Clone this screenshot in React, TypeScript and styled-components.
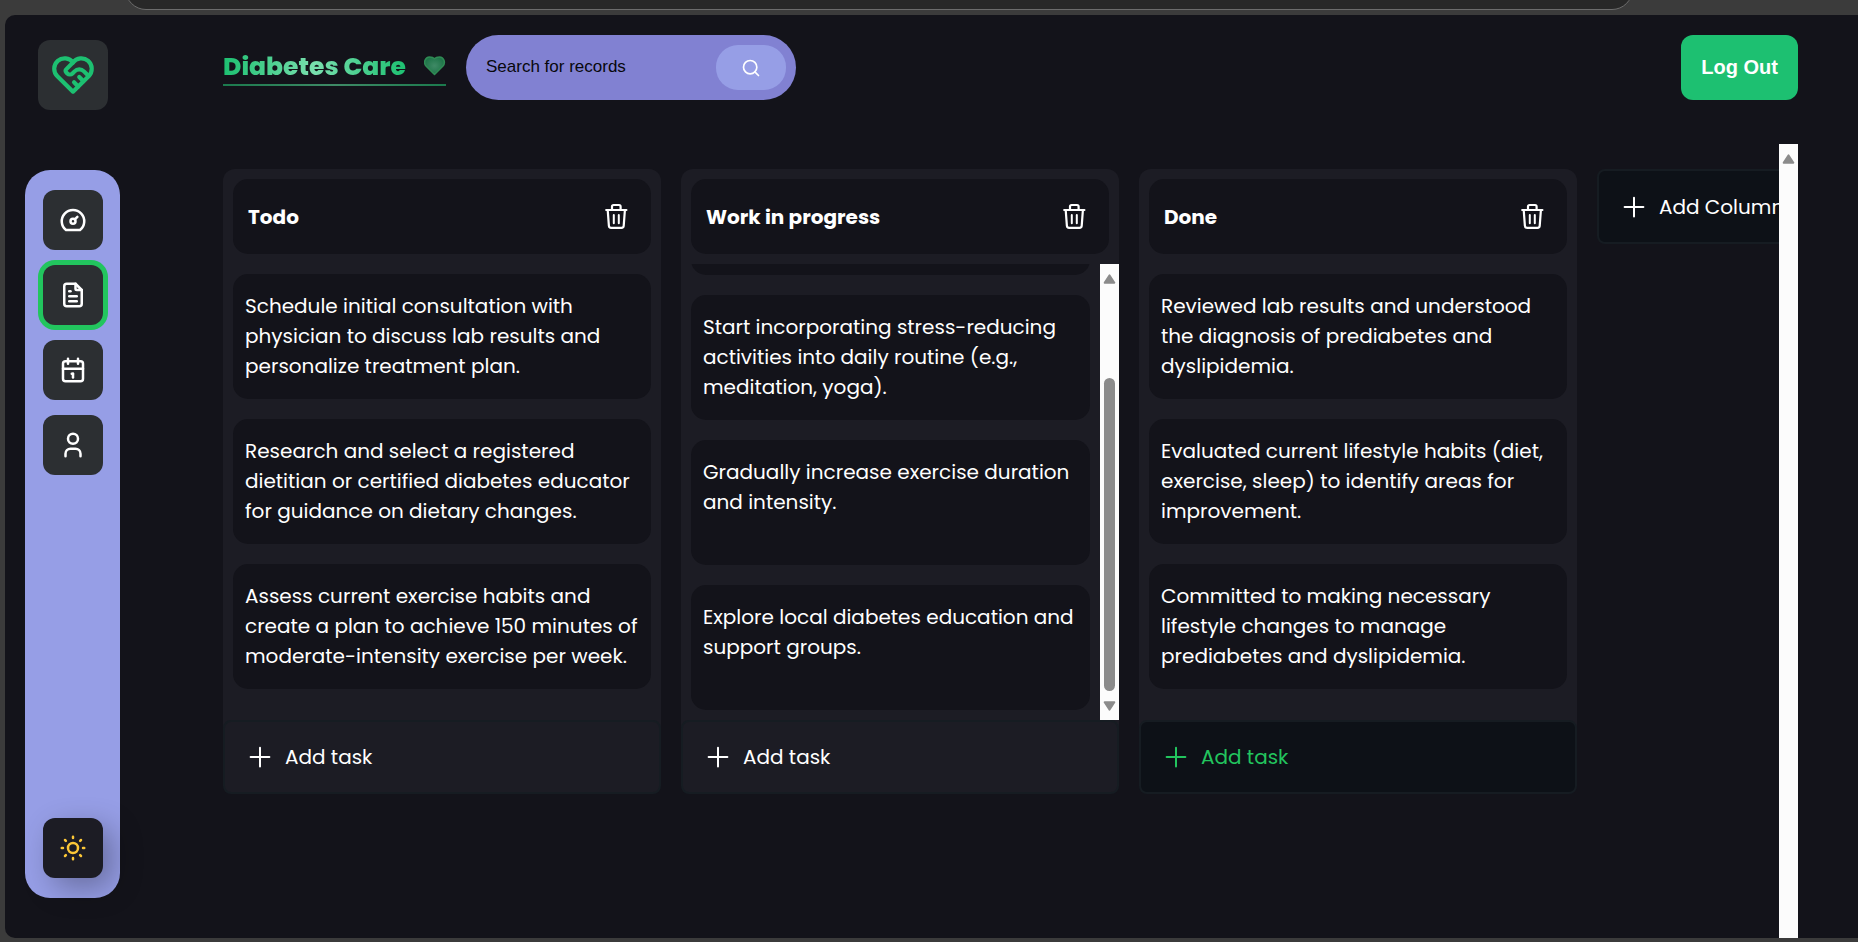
import React, { useLayoutEffect, useRef } from "react";
import styled, { createGlobalStyle, css } from "styled-components";
import { TbHeartHandshake, TbDashboard, TbFileText, TbCalendar, TbUser, TbSun } from "react-icons/tb";
import { FiSearch } from "react-icons/fi";

const GlobalStyle = createGlobalStyle`
  *, *::before, *::after { box-sizing: border-box; }
  body { margin: 0; background: #3b3b3b; }
  button, input { font: inherit; border: 0; margin: 0; }
  h1, h2, p, ul { margin: 0; padding: 0; }
`;

const Shell = styled.div`
  display: flex;
  flex-direction: column;
  height: 100vh;
  overflow: hidden;
  padding: 0 0 4px 5px;
  font-family: Poppins, Inter, sans-serif;
  font-size: 20px;
  line-height: 30px;
  color: #fff;
`;

const BrowserBar = styled.div`
  flex: none;
  display: flex;
  align-items: flex-end;
  height: 15px;
  padding: 0 225px 5px 120px;
  overflow: hidden;
`;

const AddressPill = styled.div`
  flex: 1;
  height: 42px;
  border: 1px solid #6c6c6c;
  border-radius: 21px;
  background: #282828;
`;

const Page = styled.div`
  flex: 1;
  min-height: 0;
  display: flex;
  gap: 103px;
  padding: 20px 60px 0 20px;
  border-radius: 10px 0 0 10px;
  background: #13131a;
`;

const Side = styled.aside`
  flex: none;
  display: flex;
  flex-direction: column;
  align-items: center;
  width: 95px;
  padding: 5px 0 40px;
`;

const LogoTile = styled.div`
  display: grid;
  place-items: center;
  width: 70px;
  height: 70px;
  border-radius: 12px;
  background: #2c2f32;
  color: #1dc071;
`;

const Nav = styled.nav`
  flex: 1;
  display: flex;
  flex-direction: column;
  align-items: center;
  gap: 15px;
  width: 100%;
  margin-top: 60px;
  padding: 20px 0;
  border-radius: 25px;
  background: #969ee6;
`;

const NavButton = styled.button<{ $active?: boolean }>`
  display: grid;
  place-items: center;
  width: 60px;
  height: 60px;
  padding: 0;
  border-radius: 12px;
  background: #2c2f32;
  color: #fff;
  ${(p) => p.$active && css`box-shadow: 0 0 0 5px #22c55e;`}
`;

const ThemeButton = styled(NavButton)`
  margin-top: auto;
  background: #1c1c24;
  color: #fcc737;
  box-shadow: 10px 10px 30px rgba(2, 2, 2, 0.3);
`;

const Main = styled.main`
  flex: 1;
  min-width: 0;
  display: flex;
  flex-direction: column;
`;

const Header = styled.header`
  flex: none;
  display: flex;
  align-items: center;
  gap: 20px;
  height: 65px;
`;

const Brand = styled.div`
  display: flex;
  align-items: center;
  justify-content: space-between;
  width: 223px;
  height: 37px;
  border-bottom: 2px solid;
  border-image: linear-gradient(90deg, #1b7a4d, #3f8a66, #1b7a4d) 1;
`;

const BrandName = styled.h1`
  font-size: 25px;
  line-height: 32px;
  font-weight: 800;
  white-space: nowrap;
  color: transparent;
  background: linear-gradient(90deg, #1dc071, #79dfae, #1dc071);
  background-clip: text;
  -webkit-background-clip: text;
`;

const SearchForm = styled.form`
  display: flex;
  align-items: center;
  width: 330px;
  height: 65px;
  padding: 10px 10px 10px 20px;
  border-radius: 34px;
  background: #8181d2;
`;

const SearchInput = styled.input`
  flex: 1;
  min-width: 0;
  padding: 0 0 2px;
  background: transparent;
  outline: none;
  font-family: "Liberation Sans", Arial, sans-serif;
  font-size: 17px;
  color: #08080c;
  &::placeholder { color: #08080c; opacity: 1; }
`;

const SearchButton = styled.button`
  display: grid;
  place-items: center;
  width: 70px;
  height: 45px;
  padding: 0;
  border-radius: 22px;
  background: #969ee6;
  color: #fff;
`;

const LogOut = styled.button`
  height: 65px;
  margin-left: auto;
  padding: 0 20px 2px;
  border-radius: 12px;
  background: #1dc071;
  color: #fff;
  font-family: "Liberation Sans", Arial, sans-serif;
  font-size: 20px;
  font-weight: 700;
`;

const Board = styled.section`
  flex: 1;
  min-height: 0;
  display: flex;
  margin-top: 44px;
`;

const Columns = styled.div`
  flex: 1;
  min-width: 0;
  display: flex;
  align-items: flex-start;
  gap: 20px;
  padding-top: 25px;
  overflow: hidden;
`;

const Column = styled.article`
  flex: none;
  display: flex;
  flex-direction: column;
  width: 438px;
  height: 625px;
  border-radius: 12px;
  background: #1c1c24;
`;

const ColumnHead = styled.div`
  flex: none;
  display: flex;
  align-items: center;
  justify-content: space-between;
  height: 75px;
  margin: 10px;
  padding: 0 20px 0 15px;
  border-radius: 15px;
  background: #13131a;
`;

const ColumnTitle = styled.h2`
  font-size: 20px;
  line-height: 30px;
  font-weight: 700;
`;

const IconButton = styled.button`
  display: grid;
  place-items: center;
  width: 30px;
  height: 30px;
  padding: 0;
  background: transparent;
  color: #fff;
`;

const ListArea = styled.div`
  flex: 1;
  min-height: 0;
  display: flex;
`;

const TaskList = styled.ul`
  flex: 1;
  min-width: 0;
  display: flex;
  flex-direction: column;
  gap: 20px;
  padding: 10px;
  overflow-y: auto;
  scrollbar-width: none;
  list-style: none;
`;

const Task = styled.li`
  flex: none;
  height: 125px;
  padding: 17px 12px;
  border-radius: 15px;
  background: #13131a;
`;

const AddButton = styled.button<{ $tone?: "plain" | "dark" | "active" }>`
  flex: none;
  display: flex;
  align-items: center;
  gap: 10px;
  height: 74px;
  padding: 0 20px;
  border: 2px solid #161c22;
  border-radius: 8px;
  white-space: nowrap;
  background: ${(p) => (p.$tone === "plain" ? "#1c1c24" : "#0d1117")};
  color: ${(p) => (p.$tone === "active" ? "#22c55e" : "#fff")};
`;

const AddColumn = styled(AddButton)`
  width: 438px;
  height: 75px;
`;

const Track = styled.div`
  flex: none;
  display: flex;
  flex-direction: column;
  align-items: center;
  width: 19px;
  padding: 10px 0 9px;
  background: #fcfcfc;
`;

const Thumb = styled.div`
  width: 11px;
  height: 313px;
  margin: auto 0 10px;
  border-radius: 6px;
  background: #8b8b8b;
`;

const ArrowSvg = styled.svg<{ $down?: boolean }>`
  flex: none;
  ${(p) => p.$down && css`transform: rotate(180deg);`}
`;

const Arrow = ({ down }: { down?: boolean }) => (
  <ArrowSvg $down={down} width="13" height="10" viewBox="0 0 13 10" aria-hidden="true">
    <path d="M6.5 1.2 11.4 8.8H1.6Z" fill="#8b8b8b" stroke="#8b8b8b" strokeWidth="1.8" strokeLinejoin="round" />
  </ArrowSvg>
);

const PlusIcon = () => (
  <svg width="30" height="30" viewBox="0 0 24 24" fill="none" stroke="currentColor" strokeWidth="1.6" strokeLinecap="round" aria-hidden="true">
    <path d="M12 4.5v15m7.5-7.5h-15" />
  </svg>
);

const TrashIcon = () => (
  <svg width="30" height="30" viewBox="0 0 30 30" fill="none" stroke="currentColor" strokeWidth="2.2" strokeLinecap="round" strokeLinejoin="round" aria-hidden="true">
    <path d="M5.200 8H25.400M11 8V4.600A1.600 1.600 0 0 1 12.600 3H18A1.600 1.600 0 0 1 19.600 4.600V8M6.700 8 7.900 23.800A2.200 2.200 0 0 0 10.100 25.900H20.500A2.200 2.200 0 0 0 22.700 23.800L23.900 8" />
    <path d="M12.800 13V21.200M17.800 13V21.200" strokeWidth="2" />
  </svg>
);

const HeartSvg = styled.svg`
  margin-bottom: 2px;
`;

const HeartIcon = () => (
  <HeartSvg width="22" height="20" viewBox="0 0 22 20" aria-hidden="true">
    <defs>
      <radialGradient id="heartFill">
        <stop offset="0" stopColor="#3f8a66" />
        <stop offset="1" stopColor="#1f7549" />
      </radialGradient>
    </defs>
    <path d="M10.500 18.500 2 10C-.8 6.800 1 1 5.500 1c2.200 0 4 .6 5 1.800C11.500 1.600 13.300 1 15.500 1c4.500 0 6.300 5.800 3.500 9Z" fill="url(#heartFill)" stroke="#2f8a54" strokeWidth="1.500" strokeLinejoin="round" />
  </HeartSvg>
);

type ColumnData = { title: string; tasks: string[]; scrolled?: boolean; active?: boolean };

const columns: ColumnData[] = [
  {
    title: "Todo",
    tasks: [
      "Schedule initial consultation with physician to discuss lab results and personalize treatment plan.",
      "Research and select a registered dietitian or certified diabetes educator for guidance on dietary changes.",
      "Assess current exercise habits and create a plan to achieve 150 minutes of moderate-intensity exercise per week.",
    ],
  },
  {
    title: "Work in progress",
    scrolled: true,
    tasks: [
      "",
      "Start incorporating stress-reducing activities into daily routine (e.g., meditation, yoga).",
      "Gradually increase exercise duration and intensity.",
      "Explore local diabetes education and support groups.",
    ],
  },
  {
    title: "Done",
    active: true,
    tasks: [
      "Reviewed lab results and understood the diagnosis of prediabetes and dyslipidemia.",
      "Evaluated current lifestyle habits (diet, exercise, sleep) to identify areas for improvement.",
      "Committed to making necessary lifestyle changes to manage prediabetes and dyslipidemia.",
    ],
  },
];

const BoardColumn = ({ title, tasks, scrolled, active }: ColumnData) => {
  const list = useRef<HTMLUListElement>(null);
  useLayoutEffect(() => {
    if (scrolled && list.current) list.current.scrollTop = list.current.scrollHeight;
  }, [scrolled]);
  return (
    <Column>
      <ColumnHead>
        <ColumnTitle>{title}</ColumnTitle>
        <IconButton type="button" aria-label={`Delete ${title}`}><TrashIcon /></IconButton>
      </ColumnHead>
      <ListArea>
        <TaskList ref={list}>
          {tasks.map((t, i) => <Task key={i}>{t}</Task>)}
        </TaskList>
        {scrolled && <Track><Arrow /><Thumb /><Arrow down /></Track>}
      </ListArea>
      <AddButton type="button" $tone={active ? "active" : "plain"}><PlusIcon />Add task</AddButton>
    </Column>
  );
};

export default function App() {
  return (
    <>
      <GlobalStyle />
      <Shell>
        <BrowserBar><AddressPill /></BrowserBar>
        <Page>
          <Side>
            <LogoTile><TbHeartHandshake size={50} /></LogoTile>
            <Nav aria-label="Main">
              <NavButton type="button" aria-label="Dashboard"><TbDashboard size={30} /></NavButton>
              <NavButton type="button" aria-label="Records" $active><TbFileText size={30} /></NavButton>
              <NavButton type="button" aria-label="Screening"><TbCalendar size={30} /></NavButton>
              <NavButton type="button" aria-label="Profile"><TbUser size={30} /></NavButton>
              <ThemeButton type="button" aria-label="Theme"><TbSun size={30} /></ThemeButton>
            </Nav>
          </Side>
          <Main>
            <Header>
              <Brand><BrandName>Diabetes Care</BrandName><HeartIcon /></Brand>
              <SearchForm role="search">
                <SearchInput type="text" aria-label="Search for records" placeholder="Search for records" />
                <SearchButton type="button" aria-label="Search"><FiSearch size={20} /></SearchButton>
              </SearchForm>
              <LogOut type="button">Log Out</LogOut>
            </Header>
            <Board>
              <Columns>
                {columns.map((c) => <BoardColumn key={c.title} {...c} />)}
                <AddColumn type="button" $tone="dark"><PlusIcon />Add Column</AddColumn>
              </Columns>
              <Track><Arrow /></Track>
            </Board>
          </Main>
        </Page>
      </Shell>
    </>
  );
}
